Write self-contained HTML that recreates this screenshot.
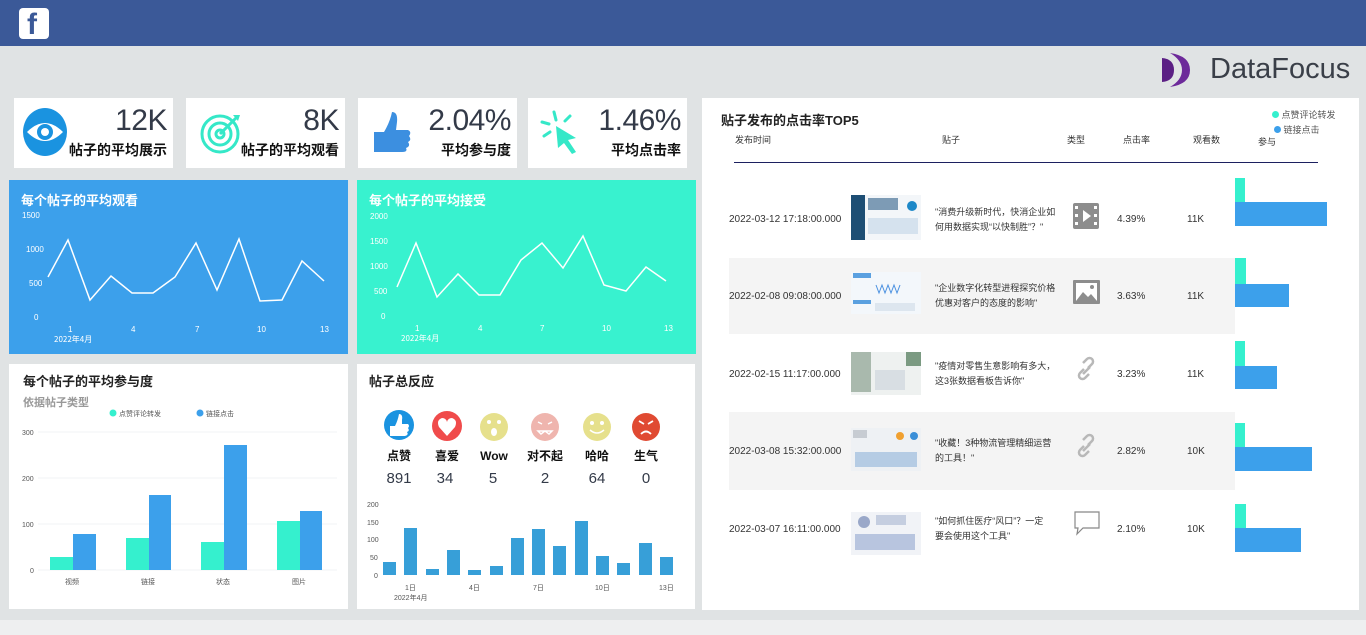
<!DOCTYPE html><html><head><meta charset="utf-8"><style>
*{margin:0;padding:0;box-sizing:border-box}
body{width:1366px;height:635px;background:#e0e3e4;font-family:"Liberation Sans","Noto Sans CJK SC",sans-serif;position:relative;overflow:hidden;color:#222}
.a{position:absolute}
.card{position:absolute;background:#fff}
.kn{position:absolute;right:6px;top:6px;font-size:30px;color:#333a48;letter-spacing:-0.5px}
.kl{position:absolute;right:6px;top:42px;font-size:14px;font-weight:bold;color:#111}
.t{font-size:11px;color:#333}
</style></head><body>
<div class="a" style="left:0;top:0;width:1366px;height:46px;background:#3b5998"></div>
<div class="a" style="left:19px;top:8px;width:30px;height:31px;background:#fff;border-radius:4px"></div>
<div class="a" style="left:27px;top:10px;font-size:30px;font-weight:bold;color:#3b5998;line-height:30px">f</div>
<div class="a" style="left:0;top:620px;width:1366px;height:15px;background:#eeeff0"></div>
<svg class="a" style="left:1158px;top:52px" width="44" height="36"><path d="M4 6 Q16 7 16 18 Q16 29 4 30 Z" fill="#5b1f84"/><path d="M12 1 Q32 4 32 18 Q32 32 12 35 Q24 28 24 18 Q24 8 12 1Z" fill="#6d2a9a"/></svg>
<div class="a" style="left:1210px;top:53px;font-size:29px;color:#3a3f48">DataFocus</div>

<div class="card" style="left:14px;top:98px;width:159px;height:70px"><svg class="a" style="left:8px;top:9px" width="46" height="50"><ellipse cx="23" cy="25" rx="22" ry="24" fill="#1a93e0"/><path d="M5 25 Q23 7 41 25 Q23 43 5 25Z" fill="#fff"/><circle cx="23" cy="25" r="8" fill="#1a93e0"/><circle cx="23" cy="25" r="4" fill="#fff"/></svg><div class="kn">12K</div><div class="kl">帖子的平均展示</div></div>
<div class="card" style="left:186px;top:98px;width:159px;height:70px"><svg class="a" style="left:14px;top:14px" width="44" height="44"><g fill="none" stroke="#35e8c8" stroke-width="3"><circle cx="20" cy="22" r="18"/><circle cx="20" cy="22" r="11"/><circle cx="20" cy="22" r="4"/><path d="M20 22 L36 6"/></g><path d="M33 3 L40 3 L38 9Z" fill="#35e8c8"/></svg><div class="kn">8K</div><div class="kl">帖子的平均观看</div></div>
<div class="card" style="left:358px;top:98px;width:159px;height:70px"><svg class="a" style="left:14px;top:12px" width="40" height="44"><path d="M2 22 L12 22 Q18 12 20 2 Q26 2 25 12 L24 20 L36 20 Q40 22 37 26 Q40 30 36 32 Q39 36 34 38 Q36 42 30 42 L12 42 L2 42Z" fill="#3c8fe0"/></svg><div class="kn">2.04%</div><div class="kl">平均参与度</div></div>
<div class="card" style="left:528px;top:98px;width:159px;height:70px"><svg class="a" style="left:12px;top:12px" width="42" height="46"><g stroke="#35e8c8" stroke-width="3" stroke-linecap="round"><path d="M14 2 L16 10"/><path d="M2 12 L9 14"/><path d="M4 26 L10 22"/><path d="M30 6 L25 11"/></g><path d="M16 16 L36 28 L28 30 L36 42 L32 44 L24 33 L18 38Z" fill="#35e8c8"/></svg><div class="kn">1.46%</div><div class="kl">平均点击率</div></div>

<div class="card" style="left:9px;top:180px;width:339px;height:174px;background:#3ca0eb"></div>
<div class="a" style="left:21px;top:190px;font-size:13px;font-weight:bold;color:#fff">每个帖子的平均观看</div>
<svg class="a" style="left:0;top:0" width="700" height="360"><g font-size="8" fill="#fff" font-family="Liberation Sans"><text x="22" y="218">1500</text><text x="26" y="252">1000</text><text x="29" y="286">500</text><text x="34" y="320">0</text><text x="68" y="332">1</text><text x="131" y="332">4</text><text x="195" y="332">7</text><text x="257" y="332">10</text><text x="320" y="332">13</text><text x="54" y="342" font-family="Noto Sans CJK SC">2022年4月</text></g>
<polyline fill="none" stroke="#fff" stroke-width="1.5" points="48,277 68,240 90,300 111,276 132,293 153,293 175,277 196,243 217,290 239,239 260,301 282,300 302,261 324,281"/>
</svg>
<div class="card" style="left:357px;top:180px;width:339px;height:174px;background:#38f2cf"></div>
<div class="a" style="left:369px;top:190px;font-size:13px;font-weight:bold;color:#fff">每个帖子的平均接受</div>
<svg class="a" style="left:0;top:0" width="700" height="360"><g font-size="8" fill="#fff" font-family="Liberation Sans"><text x="370" y="219">2000</text><text x="370" y="244">1500</text><text x="370" y="269">1000</text><text x="374" y="294">500</text><text x="381" y="319">0</text><text x="415" y="331">1</text><text x="478" y="331">4</text><text x="540" y="331">7</text><text x="602" y="331">10</text><text x="664" y="331">13</text><text x="401" y="341" font-family="Noto Sans CJK SC">2022年4月</text></g>
<polyline fill="none" stroke="#fff" stroke-width="1.5" points="397,287 416,243 437,297 458,274 479,295 500,295 521,260 542,243 563,268 583,236 604,285 626,291 646,267 666,281"/></svg>

<div class="card" style="left:9px;top:364px;width:339px;height:245px"></div>
<div class="a" style="left:23px;top:371px;font-size:13px;font-weight:bold">每个帖子的平均参与度</div>
<div class="a" style="left:23px;top:394px;font-size:11px;font-weight:bold;color:#999">依据帖子类型</div>
<svg class="a" style="left:0;top:0" width="700" height="620"><g font-size="7" fill="#555" font-family="Liberation Sans,Noto Sans CJK SC"><circle cx="113" cy="413" r="3.5" fill="#35f0ce"/><text x="119" y="416">点赞评论转发</text><circle cx="200" cy="413" r="3.5" fill="#3ca0eb"/><text x="206" y="416">链接点击</text>
<text x="22" y="435">300</text><text x="22" y="481">200</text><text x="22" y="527">100</text><text x="30" y="573">0</text>
<text x="65" y="584">视频</text><text x="141" y="584">链接</text><text x="216" y="584">状态</text><text x="292" y="584">图片</text></g>
<g stroke="#f2f3f5"><line x1="38" y1="432" x2="337" y2="432"/><line x1="38" y1="478" x2="337" y2="478"/><line x1="38" y1="524" x2="337" y2="524"/><line x1="38" y1="570" x2="337" y2="570"/></g>
<g fill="#35f0ce"><rect x="50" y="557" width="23" height="13"/><rect x="126" y="538" width="23" height="32"/><rect x="201" y="542" width="23" height="28"/><rect x="277" y="521" width="23" height="49"/></g>
<g fill="#3ca0eb"><rect x="73" y="534" width="23" height="36"/><rect x="149" y="495" width="22" height="75"/><rect x="224" y="445" width="23" height="125"/><rect x="300" y="511" width="22" height="59"/></g>
</svg>

<div class="card" style="left:357px;top:364px;width:338px;height:245px"></div>
<div class="a" style="left:369px;top:371px;font-size:13px;font-weight:bold">帖子总反应</div>
<svg class="a" style="left:0;top:0" width="700" height="620">
<circle cx="399" cy="425" r="15" fill="#1a93e0"/><path d="M390 426 L395 426 Q398 420 399 414 Q403 414 402 420 L402 424 L408 424 Q410 426 408 428 Q410 431 407 432 Q409 435 405 436 L390 436Z" fill="#fff"/>
<circle cx="447" cy="426" r="15" fill="#f04b4b"/><path d="M447 436 L439 427 Q436 420 442 418 Q446 418 447 422 Q448 418 452 418 Q458 420 455 427Z" fill="#fff"/>
<circle cx="494" cy="427" r="14" fill="#e6e08c"/><circle cx="489" cy="422" r="2" fill="#fff"/><circle cx="499" cy="422" r="2" fill="#fff"/><ellipse cx="494" cy="432" rx="3" ry="4" fill="#fff"/>
<circle cx="545" cy="427" r="14" fill="#efb5ae"/><path d="M538 422 L542 424 M552 422 L548 424 M538 431 L552 431 L549 434 L545 431 L541 434Z" stroke="#fff" stroke-width="1.5" fill="none"/>
<circle cx="597" cy="427" r="14" fill="#e6e08c"/><circle cx="592" cy="423" r="2" fill="#fff"/><circle cx="602" cy="423" r="2" fill="#fff"/><path d="M590 430 Q597 436 604 430" stroke="#fff" stroke-width="1.5" fill="none"/>
<circle cx="646" cy="427" r="14" fill="#e04a32"/><path d="M639 421 L644 424 M653 421 L648 424 M641 434 Q646 429 651 434" stroke="#fff" stroke-width="1.8" fill="none"/>
<g font-size="12" font-weight="bold" text-anchor="middle" font-family="Liberation Sans,Noto Sans CJK SC" fill="#111"><text x="399" y="460">点赞</text><text x="447" y="460">喜爱</text><text x="494" y="460">Wow</text><text x="545" y="460">对不起</text><text x="597" y="460">哈哈</text><text x="646" y="460">生气</text></g>
<g font-size="15" text-anchor="middle" fill="#333a48" font-family="Liberation Sans"><text x="399" y="483">891</text><text x="445" y="483">34</text><text x="493" y="483">5</text><text x="545" y="483">2</text><text x="597" y="483">64</text><text x="646" y="483">0</text></g>
<g font-size="7" fill="#555" font-family="Liberation Sans,Noto Sans CJK SC"><text x="367" y="507">200</text><text x="367" y="525">150</text><text x="367" y="542">100</text><text x="370" y="560">50</text><text x="374" y="578">0</text><text x="405" y="590">1日</text><text x="469" y="590">4日</text><text x="533" y="590">7日</text><text x="595" y="590">10日</text><text x="659" y="590">13日</text><text x="394" y="600">2022年4月</text></g>
<g fill="#379fd8">
<rect x="383" y="562" width="13" height="13"/><rect x="404" y="528" width="13" height="47"/><rect x="426" y="569" width="13" height="6"/><rect x="447" y="550" width="13" height="25"/><rect x="468" y="570" width="13" height="5"/><rect x="490" y="566" width="13" height="9"/><rect x="511" y="538" width="13" height="37"/><rect x="532" y="529" width="13" height="46"/><rect x="553" y="546" width="13" height="29"/><rect x="575" y="521" width="13" height="54"/><rect x="596" y="556" width="13" height="19"/><rect x="617" y="563" width="13" height="12"/><rect x="639" y="543" width="13" height="32"/><rect x="660" y="557" width="13" height="18"/></g>
</svg>

<div class="card" style="left:702px;top:98px;width:657px;height:512px"></div>
<div class="a" style="left:721px;top:110px;font-size:13px;font-weight:bold">贴子发布的点击率TOP5</div>
<div class="a t" style="left:1272px;top:108px;font-size:9px;color:#555"><span style="display:inline-block;width:7px;height:7px;border-radius:50%;background:#35f0ce"></span> 点赞评论转发</div>
<div class="a t" style="left:1274px;top:123px;font-size:9px;color:#555"><span style="display:inline-block;width:7px;height:7px;border-radius:50%;background:#3ca0eb"></span> 链接点击</div>
<div class="a t" style="left:735px;top:133px;font-size:9px">发布时间</div><div class="a t" style="left:942px;top:133px;font-size:9px">贴子</div><div class="a t" style="left:1067px;top:133px;font-size:9px">类型</div><div class="a t" style="left:1123px;top:133px;font-size:9px">点击率</div><div class="a t" style="left:1193px;top:133px;font-size:9px">观看数</div><div class="a t" style="left:1258px;top:135px;font-size:9px">参与</div>
<div class="a" style="left:734px;top:162px;width:584px;height:1px;background:#1c2060"></div>
<div class="a" style="left:729px;top:258px;width:506px;height:76px;background:#f4f4f4"></div>
<div class="a" style="left:729px;top:412px;width:506px;height:78px;background:#f4f4f4"></div>
<svg class="a" style="left:0;top:0" width="1366" height="620">
<g font-size="10" fill="#333" font-family="Liberation Sans"><text x="729" y="222">2022-03-12 17:18:00.000</text><text x="729" y="299">2022-02-08 09:08:00.000</text><text x="729" y="377">2022-02-15 11:17:00.000</text><text x="729" y="454">2022-03-08 15:32:00.000</text><text x="729" y="532">2022-03-07 16:11:00.000</text>
<text x="1117" y="222">4.39%</text><text x="1117" y="299">3.63%</text><text x="1117" y="377">3.23%</text><text x="1117" y="454">2.82%</text><text x="1117" y="532">2.10%</text>
<text x="1187" y="222">11K</text><text x="1187" y="299">11K</text><text x="1187" y="377">11K</text><text x="1187" y="454">10K</text><text x="1187" y="532">10K</text></g>
<g font-size="9" fill="#333" font-family="Liberation Sans,Noto Sans CJK SC"><text x="935" y="215">"消费升级新时代，快消企业如</text><text x="935" y="230">何用数据实现“以快制胜”？"</text><text x="935" y="291">"企业数字化转型进程探究价格</text><text x="935" y="306">优惠对客户的态度的影响"</text><text x="935" y="369">"疫情对零售生意影响有多大，</text><text x="935" y="384">这3张数据看板告诉你"</text><text x="935" y="446">"收藏！3种物流管理精细运营</text><text x="935" y="461">的工具！"</text><text x="935" y="524">"如何抓住医疗“风口”？一定</text><text x="935" y="539">要会使用这个工具"</text></g>
<g>
<rect x="851" y="195" width="70" height="45" fill="#f3f6f9"/><rect x="851" y="195" width="14" height="45" fill="#1d4e74"/><rect x="868" y="198" width="30" height="12" fill="#7d9bb5"/><circle cx="912" cy="206" r="5" fill="#1d88c8"/><rect x="868" y="218" width="50" height="16" fill="#d5e2ee"/>
<rect x="851" y="272" width="70" height="42" fill="#f3f7fb"/><rect x="853" y="273" width="18" height="5" fill="#5aa0e0"/><rect x="853" y="300" width="18" height="4" fill="#5aa0e0"/><path d="M876 285 l3 8 l3 -8 l3 8 l3 -8 l3 8 l3 -8 l3 8 l3 -8" stroke="#4a90e0" fill="none"/><rect x="875" y="303" width="40" height="8" fill="#dde6ef"/>
<rect x="851" y="352" width="70" height="43" fill="#eef1f0"/><rect x="851" y="352" width="20" height="40" fill="#a9b9ad"/><rect x="906" y="352" width="15" height="14" fill="#7b9a82"/><rect x="875" y="370" width="30" height="20" fill="#d8dee3"/>
<rect x="851" y="428" width="70" height="43" fill="#eef1f4"/><rect x="853" y="430" width="14" height="8" fill="#c7ccd2"/><circle cx="900" cy="436" r="4" fill="#f0a030"/><circle cx="914" cy="436" r="4" fill="#3a8fd8"/><rect x="855" y="452" width="62" height="15" fill="#b5cce4"/>
<rect x="851" y="512" width="70" height="43" fill="#f1f3f7"/><circle cx="864" cy="522" r="6" fill="#9aa8c9"/><rect x="876" y="515" width="30" height="10" fill="#c5cee0"/><rect x="855" y="534" width="60" height="16" fill="#b8c5df"/>
</g>
<g fill="#8d8d8d"><rect x="1073" y="203" width="26" height="26" rx="2"/><g fill="#fff"><rect x="1075" y="206" width="3" height="3"/><rect x="1075" y="214" width="3" height="3"/><rect x="1075" y="222" width="3" height="3"/><rect x="1094" y="206" width="3" height="3"/><rect x="1094" y="214" width="3" height="3"/><rect x="1094" y="222" width="3" height="3"/></g><path d="M1083 210 L1091 216 L1083 222Z" fill="#fff"/>
<rect x="1073" y="280" width="27" height="24" rx="1"/><rect x="1076" y="283" width="21" height="18" fill="#fff"/><path d="M1076 301 L1083 292 L1088 297 L1091 294 L1097 301Z"/><circle cx="1092" cy="287" r="2"/></g>
<g fill="none" stroke="#b8b8b8" stroke-width="2.5"><path d="M1084 369 l-4 4 a3.5 3.5 0 0 0 5 5 l4 -4 M1088 368 l4 -4 a3.5 3.5 0 0 0 -5 -5 l-4 4 M1083 374 l7 -7"/><path d="M1084 446 l-4 4 a3.5 3.5 0 0 0 5 5 l4 -4 M1088 445 l4 -4 a3.5 3.5 0 0 0 -5 -5 l-4 4 M1083 451 l7 -7"/></g>
<path d="M1075 512 L1099 512 L1099 528 L1083 528 L1077 534 L1078 528 L1075 528Z" fill="#fff" stroke="#888" stroke-width="1.2"/>
<g fill="#35f0ce"><rect x="1235" y="178" width="10" height="24"/><rect x="1235" y="258" width="11" height="26"/><rect x="1235" y="341" width="10" height="25"/><rect x="1235" y="423" width="10" height="24"/><rect x="1235" y="504" width="11" height="24"/></g>
<g fill="#3ca0eb"><rect x="1235" y="202" width="92" height="24"/><rect x="1235" y="284" width="54" height="23"/><rect x="1235" y="366" width="42" height="23"/><rect x="1235" y="447" width="77" height="24"/><rect x="1235" y="528" width="66" height="24"/></g>
</svg>
</body></html>
